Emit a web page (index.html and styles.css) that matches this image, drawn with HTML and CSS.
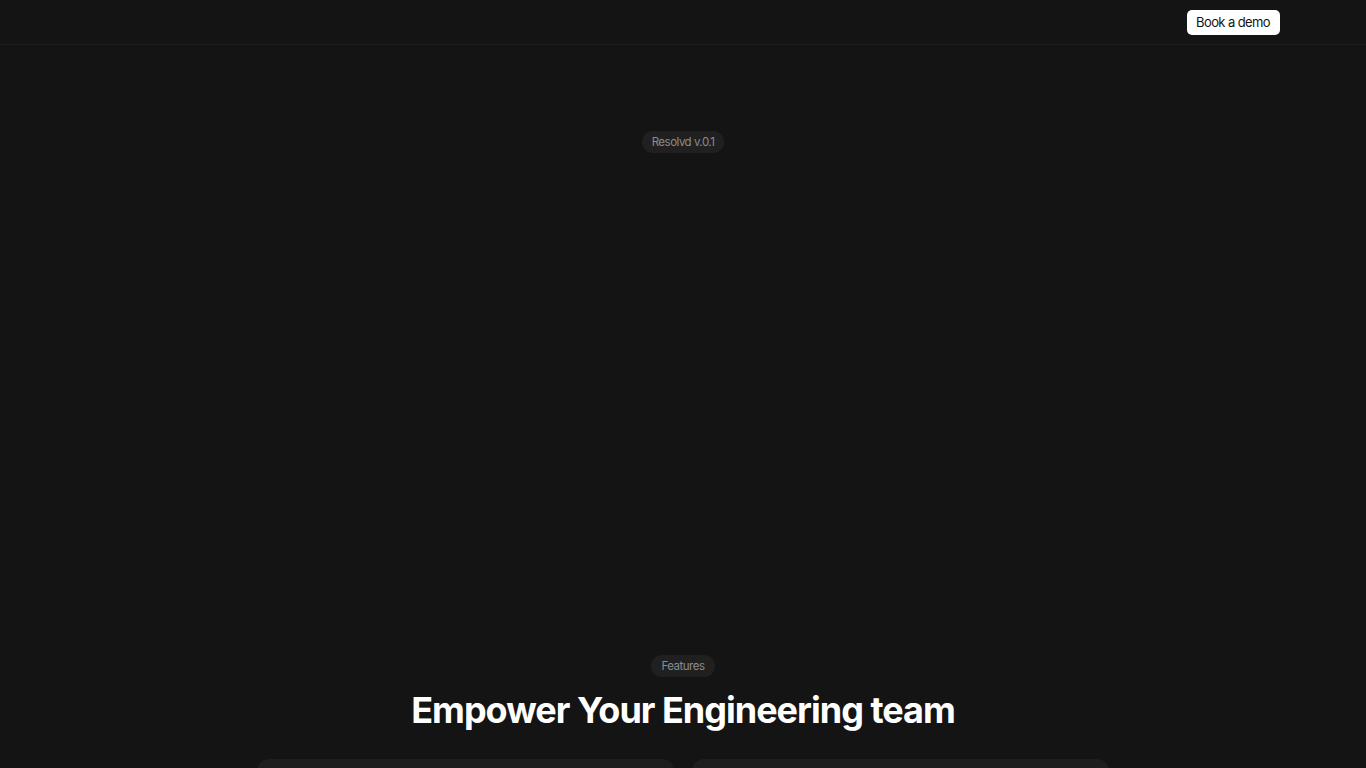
FILE: index.html
```html
<!DOCTYPE html>
<html lang="en">
<head>
    <meta charset="UTF-8">
    <meta name="viewport" content="width=device-width, initial-scale=1.0">
    <title>Resolvd</title>
    <link rel="stylesheet" href="styles.css">
</head>
<body>

<header class="site-header">
    <div class="header-inner">
        <a href="#" class="demo-btn">Book a demo</a>
    </div>
</header>

<section class="hero">
    <span class="pill">Resolvd v.0.1</span>
    <div class="hero-visual"></div>
</section>

<section class="features">
    <span class="pill">Features</span>
    <h2 class="features-title">Empower Your Engineering team</h2>
    <div class="feature-grid">
        <div class="feature-card"></div>
        <div class="feature-card"></div>
    </div>
</section>

</body>
</html>
```

FILE: styles.css
```css
/* Base */
* {
    box-sizing: border-box;
}
body {
    margin: 0;
    font-family: Inter, "Noto Sans", Arial, sans-serif;
    background-color: #141414;
    color: #fff;
}

/* Header */
.site-header {
    height: 45px;
    border-bottom: 1px solid #1c1c1c;
}
.header-inner {
    height: 44px;
    display: flex;
    justify-content: flex-end;
    align-items: center;
    padding-right: 86px;
}
.demo-btn {
    display: inline-block;
    background: #fff;
    color: #141414;
    text-decoration: none;
    font-size: 13px;
    letter-spacing: -0.6px;
    line-height: 17px;
    padding: 4px 10px 4px 9.5px;
    border-radius: 5px;
    margin-top: 1px;
}

/* Pills */
.pill {
    display: inline-block;
    background: #202020;
    color: #8c8c8c;
    font-size: 11.5px;
    letter-spacing: -0.5px;
    line-height: 14px;
    padding: 4px 10px;
    border-radius: 11px;
}

/* Hero */
.hero {
    display: flex;
    flex-direction: column;
    align-items: center;
    padding-top: 86px;
}
.hero-visual {
    width: 100%;
    height: 502px;
}

/* Features */
.features {
    display: flex;
    flex-direction: column;
    align-items: center;
}
.features-title {
    margin: 9px 0 25px;
    font-size: 36px;
    line-height: 48px;
    font-weight: 700;
    letter-spacing: -1px;
}
.feature-grid {
    display: grid;
    grid-template-columns: 417px 417px;
    gap: 18px;
}
.feature-card {
    height: 260px;
    background: #1e1e1e;
    border-radius: 12px;
}
```
